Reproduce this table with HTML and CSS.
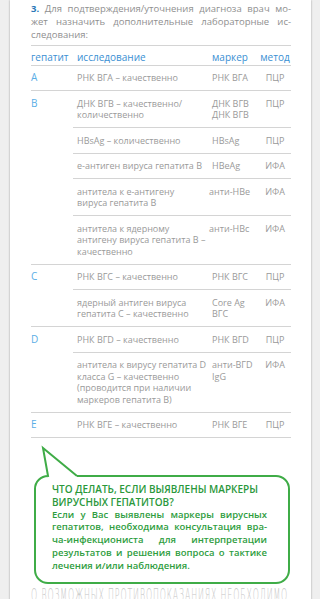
FILE: index.html
```html
<!DOCTYPE html>
<html lang="ru">
<head>
<meta charset="utf-8">
<link rel="stylesheet" href="styles.css">
</head>
<body>
<div class="page">
  <div class="intro">
    <span class="ln"><b class="num">3.</b> Для подтверждения/уточнения диагноза врач мо-</span>
    <span class="ln">жет назначить дополнительные лабораторные ис-</span>
    <span class="ln last">следования:</span>
  </div>

  <div class="tbl">
    <div class="thead">
      <span>гепатит</span><span class="res">исследование</span><span>маркер</span><span class="meth">метод</span>
    </div>

    <div class="grp">
      <div class="hep">A</div>
      <div class="items">
        <div class="item"><div class="res">РНК ВГА – качественно</div><div>РНК ВГА</div><div class="meth">ПЦР</div></div>
      </div>
    </div>

    <div class="grp">
      <div class="hep">B</div>
      <div class="items">
        <div class="item"><div class="res">ДНК ВГВ – качественно/<br>количественно</div><div>ДНК ВГВ<br>ДНК ВГВ</div><div class="meth">ПЦР</div></div>
        <div class="item"><div class="res">HBsAg – количественно</div><div>HBsAg</div><div class="meth">ПЦР</div></div>
        <div class="item"><div class="res">е-антиген вируса гепатита В</div><div>HBeAg</div><div class="meth">ИФА</div></div>
        <div class="item"><div class="res">антитела к е-антигену<br>вируса гепатита В</div><div class="mark-l">анти-НВе</div><div class="meth">ИФА</div></div>
        <div class="item"><div class="res">антитела к ядерному<br>антигену вируса гепатита В –<br>качественно</div><div class="mark-l">анти-НВс</div><div class="meth">ИФА</div></div>
      </div>
    </div>

    <div class="grp">
      <div class="hep">C</div>
      <div class="items">
        <div class="item"><div class="res">РНК ВГС – качественно</div><div>РНК ВГС</div><div class="meth">ПЦР</div></div>
        <div class="item"><div class="res">ядерный антиген вируса<br>гепатита С – качественно</div><div>Core Ag<br>ВГС</div><div class="meth">ИФА</div></div>
      </div>
    </div>

    <div class="grp">
      <div class="hep">D</div>
      <div class="items">
        <div class="item"><div class="res">РНК ВГD – качественно</div><div>РНК ВГD</div><div class="meth">ПЦР</div></div>
        <div class="item"><div class="res">антитела к вирусу гепатита D<br>класса G – качественно<br>(проводится при наличии<br>маркеров гепатита В)</div><div>анти-ВГD<br>IgG</div><div class="meth">ИФА</div></div>
      </div>
    </div>

    <div class="grp">
      <div class="hep">E</div>
      <div class="items">
        <div class="item"><div class="res">РНК ВГЕ – качественно</div><div>РНК ВГЕ</div><div class="meth">ПЦР</div></div>
      </div>
    </div>
  </div>

  <div class="bubble">
    <svg class="tail" width="50" height="36" viewBox="0 0 50 36">
      <path d="M13.6 35 L9 3 L43 31 L43 35 Z" fill="#fff"/>
      <path d="M14.2 32 L9 3 L43 31" fill="none" stroke="#3fac47" stroke-width="2" stroke-linejoin="miter"/>
    </svg>
    <p class="b-title">
      <span class="bl">ЧТО ДЕЛАТЬ, ЕСЛИ ВЫЯВЛЕНЫ МАРКЕРЫ</span>
      <span class="bl">ВИРУСНЫХ ГЕПАТИТОВ?</span>
    </p>
    <p class="b-text">
      <span class="ln">Если у Вас выявлены маркеры вирусных</span>
      <span class="ln">гепатитов, необходима консультация вра-</span>
      <span class="ln">ча-инфекциониста для интерпретации</span>
      <span class="ln">результатов и решения вопроса о тактике</span>
      <span class="ln last">лечения и/или наблюдения.</span>
    </p>
  </div>

  <div class="next"><span class="next-in">О ВОЗМОЖНЫХ ПРОТИВОПОКАЗАНИЯХ НЕОБХОДИМО</span></div>
</div>
</body>
</html>
```

FILE: styles.css
```css
html, body {
  margin: 0;
  padding: 0;
}

body {
  background: #efefef;
  font-family: "Open Sans", "Noto Sans", sans-serif;
  overflow: hidden;
}

.page {
  box-sizing: border-box;
  margin-left: 10px;
  width: 301px;
  min-height: 640px;
  background: #fff;
  box-shadow: 0 0 2px rgba(0, 0, 0, 0.35);
  padding: 3px 20px 0 21px;
}

.ln {
  display: block;
  text-align: justify;
  text-align-last: justify;
}

.ln.last {
  text-align-last: left;
}

.intro {
  font-size: 9.5px;
  line-height: 12.8px;
  color: #8f8f8f;
  margin-bottom: 3.6px;
}

.num {
  color: #2a78b8;
  font-weight: 700;
}

.tbl {
  border-top: 1px solid #d4d4d4;
}

.thead {
  display: grid;
  grid-template-columns: 42px 139px 47px 32px;
  padding: 5px 0 1px;
  line-height: 13px;
  font-size: 10px;
  color: #3a8fd3;
  border-bottom: 1px solid #d4d4d4;
}

.res {
  padding-left: 4px;
}

.meth {
  text-align: center;
}

.grp {
  display: flex;
  border-bottom: 1px solid #d4d4d4;
}

.hep {
  flex: none;
  width: 42px;
  padding-top: 6.5px;
  line-height: 11.5px;
  font-size: 10px;
  color: #5aaee6;
}

.items {
  flex: 1;
}

.item {
  display: grid;
  grid-template-columns: 139px 47px 32px;
  padding: 6.5px 0;
  line-height: 11.5px;
  font-size: 9px;
  color: #9a9a9a;
}

.item + .item {
  border-top: 1px solid #d4d4d4;
}

.mark-l {
  margin-left: -3px;
}

.bubble {
  position: relative;
  margin: 37px 1px 0 3px;
  border: 2px solid #3fac47;
  border-radius: 14px;
  padding: 5.6px 21px 9.6px 16px;
  color: #2e9d3e;
  font-size: 9.5px;
  line-height: 12.8px;
  font-weight: 600;
}

.tail {
  position: absolute;
  left: -2px;
  top: -32px;
  overflow: visible;
}

.bubble p {
  margin: 0;
}

.b-title {
  font-size: 10px;
  color: #2a983b;
  white-space: nowrap;
}

.bl {
  display: block;
}

.next {
  margin-top: 2px;
  height: 20px;
  line-height: 18px;
  overflow: hidden;
  white-space: nowrap;
}

.next-in {
  display: inline-block;
  font-family: "DejaVu Sans", sans-serif;
  font-stretch: condensed;
  font-weight: 200;
  font-size: 18px;
  letter-spacing: 2px;
  color: #c4c4c4;
  transform-origin: left top;
  transform: scaleX(0.435);
}
```
